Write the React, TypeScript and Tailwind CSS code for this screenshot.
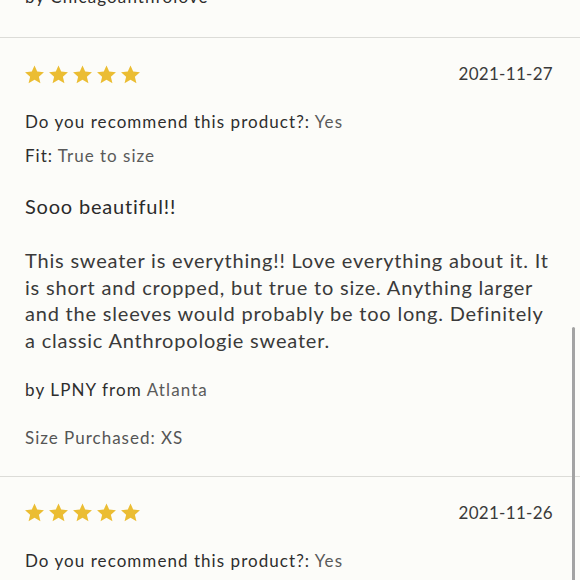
import React from 'react';

interface Review {
  date: string;
  recommend: string;
  fit?: string;
  title?: string;
  body?: string;
  author?: string;
  location?: string;
  size?: string;
}

const reviews: Review[] = [
  {
    date: '2021-11-27',
    recommend: 'Yes',
    fit: 'True to size',
    title: 'Sooo beautiful!!',
    body:
      'This sweater is everything!! Love everything about it. It is short and cropped, but true to size. Anything larger and the sleeves would probably be too long. Definitely a classic Anthropologie sweater.',
    author: 'LPNY',
    location: 'Atlanta',
    size: 'XS',
  },
  {
    date: '2021-11-26',
    recommend: 'Yes',
  },
];

const Star = () => (
  <svg width="21" height="21" viewBox="0 0 24 24" className="fill-[#ebbd33]">
    <path d="M12 1.6l3.1 7.1 7.7.7-5.8 5.1 1.8 7.6L12 18.1l-6.8 4 1.8-7.6-5.8-5.1 7.7-.7z" />
  </svg>
);

function ReviewCard({ review }: { review: Review }) {
  return (
    <div className="pt-6 pb-[26px] pl-[25px] pr-[27px] border-b border-[#dcdcd8]">
      {/* 별점 + 날짜 */}
      <div className="flex items-center justify-between h-6">
        <div className="flex gap-[3px] -ml-[1px]">
          {[0, 1, 2, 3, 4].map((i) => (
            <Star key={i} />
          ))}
        </div>
        <span className="text-[17px] tracking-[0.3px] text-[#3a3a3a]">{review.date}</span>
      </div>

      <p className="mt-6 text-[17px] leading-6 tracking-[1.05px] text-[#2e2e2e]">
        Do you recommend this product?: <span className="text-[#5a5a5a]">{review.recommend}</span>
      </p>

      {review.fit && (
        <p className="mt-[10px] text-[17px] leading-6 tracking-[1px] text-[#2e2e2e]">
          Fit: <span className="text-[#5a5a5a]">{review.fit}</span>
        </p>
      )}

      {review.title && (
        <h3 className="mt-6 text-[20px] leading-7 tracking-[0.8px] text-[#2b2b2b]">{review.title}</h3>
      )}

      {review.body && (
        <p className="mt-[27px] text-[20px] leading-[26.7px] tracking-[0.8px] text-[#3a3a3a]">
          {review.body}
        </p>
      )}

      {review.author && (
        <p className="mt-6 text-[17px] leading-6 tracking-[1.1px] text-[#2e2e2e]">
          by {review.author} from <span className="text-[#5a5a5a]">{review.location}</span>
        </p>
      )}

      {review.size && (
        <p className="mt-6 text-[17px] leading-6 tracking-[1px] text-[#555]">
          Size Purchased: {review.size}
        </p>
      )}
    </div>
  );
}

export default function App() {
  return (
    <div
      className="relative w-[580px] h-[580px] overflow-hidden bg-[#fcfcf9]"
      style={{ fontFamily: 'Lato, "Noto Sans", sans-serif' }}
    >
      <div className="-mt-[15px]">
        {/* 이전 리뷰의 끝부분 */}
        <div className="pl-[25px] pr-[27px] pb-[28px] border-b border-[#dcdcd8]">
          <p className="text-[17px] leading-6 tracking-[1.1px] text-[#2e2e2e]">by Chicagoanthrolove</p>
        </div>
        {reviews.map((r) => (
          <ReviewCard key={r.date} review={r} />
        ))}
      </div>

      {/* 스크롤바 */}
      <div className="absolute right-[5px] top-[327px] w-[3px] h-[260px] rounded-full bg-[#a3a3a3]" />
    </div>
  );
}
